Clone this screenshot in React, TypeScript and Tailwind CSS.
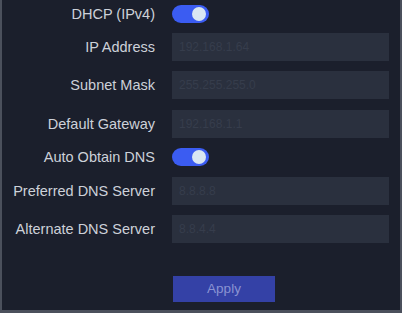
import React from 'react';

function Toggle() {
  return (
    <div className="w-[37px] h-[18px] rounded-full bg-[#3b5cf2] relative">
      <span className="absolute right-[3px] top-[2px] w-[14px] h-[14px] rounded-full bg-[#d9e6f2]" />
    </div>
  );
}

function Row({ label, children, className = '' }: { label: string; children: React.ReactNode; className?: string }) {
  return (
    <div className={`flex items-center ${className}`}>
      <div className="w-[155px] text-right text-[14.5px] text-[#cdd1d9] leading-none whitespace-nowrap">{label}</div>
      <div className="ml-[17px] flex items-center">{children}</div>
    </div>
  );
}

function Field({ value }: { value: string }) {
  return (
    <div className="w-[217px] h-[28px] bg-[#2a303e] flex items-center px-[7px] text-[12px] text-[#363d4c]">
      {value}
    </div>
  );
}

export default function App() {
  return (
    <div
      className="w-[402px] h-[313px] bg-[#1b1f2c] border-l-2 border-r-2 border-b-[3px] border-[#4b505c] overflow-hidden"
      style={{ fontFamily: '"Liberation Sans", Arial, sans-serif' }}
    >
      <div className="pt-[5px] flex flex-col -ml-[2px]">
        <Row label="DHCP (IPv4)" className="h-[18px]">
          <Toggle />
        </Row>
        <Row label="IP Address" className="mt-[10px] h-[28px]">
          <Field value="192.168.1.64" />
        </Row>
        <Row label="Subnet Mask" className="mt-[10px] h-[28px]">
          <Field value="255.255.255.0" />
        </Row>
        <Row label="Default Gateway" className="mt-[11px] h-[28px]">
          <Field value="192.168.1.1" />
        </Row>
        <Row label="Auto Obtain DNS" className="mt-[10px] h-[18px]">
          <Toggle />
        </Row>
        <Row label="Preferred DNS Server" className="mt-[11px] h-[28px]">
          <Field value="8.8.8.8" />
        </Row>
        <Row label="Alternate DNS Server" className="mt-[10px] h-[28px]">
          <Field value="8.8.4.4" />
        </Row>
        <div className="mt-[33px] ml-[173px]">
          <button className="w-[102px] h-[26px] bg-[#3441a6] text-[13.5px] text-[#8a93d2]">Apply</button>
        </div>
      </div>
    </div>
  );
}
